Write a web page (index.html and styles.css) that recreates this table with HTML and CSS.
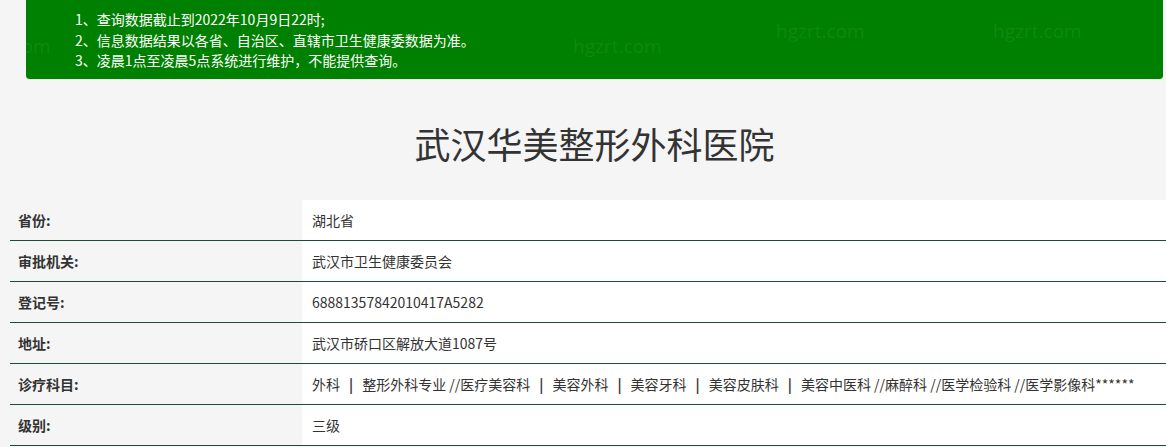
FILE: index.html
```html
<!DOCTYPE html>
<html lang="zh-CN">
<head>
<meta charset="utf-8">
<title>武汉华美整形外科医院</title>
<link rel="stylesheet" href="styles.css">
</head>
<body>
<div class="notice">
  <p>1、查询数据截止到2022年10月9日22时;</p>
  <p>2、信息数据结果以各省、自治区、直辖市卫生健康委数据为准。</p>
  <p>3、凌晨1点至凌晨5点系统进行维护，不能提供查询。</p>
  <span class="wm wm1">hgzrt.com</span>
  <span class="wm wm4">hgzrt.com</span>
  <span class="wm wm5">hgzrt.com</span>
  <span class="wm wm6">hgzrt.com</span>
</div>
<h1 class="title">武汉华美整形外科医院</h1>
<div class="info">
  <div class="row"><div class="label">省份:</div><div class="value">湖北省</div></div>
  <div class="row"><div class="label">审批机关:</div><div class="value">武汉市卫生健康委员会</div></div>
  <div class="row"><div class="label">登记号:</div><div class="value">68881357842010417A5282</div></div>
  <div class="row"><div class="label">地址:</div><div class="value">武汉市硚口区解放大道1087号</div></div>
  <div class="row"><div class="label">诊疗科目:</div><div class="value">外科<span class="sep">|</span>整形外科专业 //医疗美容科<span class="sep">|</span>美容外科<span class="sep">|</span>美容牙科<span class="sep">|</span>美容皮肤科<span class="sep">|</span>美容中医科 //麻醉科 //医学检验科 //医学影像科******</div></div>
  <div class="row"><div class="label">级别:</div><div class="value">三级</div></div>
</div>
</body>
</html>
```
FILE: styles.css
```css
html, body {
  margin: 0;
  padding: 0;
}
body {
  background: #f5f5f5;
  font-family: "Noto Sans CJK SC", "Microsoft YaHei", sans-serif;
  color: #333;
  overflow: hidden;
}
.notice {
  position: relative;
  overflow: hidden;
  margin-left: 26px;
  width: 1137px;
  height: 80px;
  box-sizing: border-box;
  padding: 9px 0 0 49px;
  background: #008000;
  border-radius: 0 0 4px 4px;
  color: #fff;
  font-size: 14px;
  border-bottom: 1px solid #e8f0e8;
}
.notice p {
  margin: 0;
  line-height: 20.5px;
  position: relative;
  z-index: 1;
}
.wm {
  position: absolute;
  font-family: "Open Sans", sans-serif;
  font-size: 19px;
  color: rgba(255, 255, 255, 0.08);
  white-space: nowrap;
}
.wm1 { left: -64px; top: 33px; }
.wm4 { left: 547px; top: 33px; }
.wm5 { left: 750px; top: 18px; }
.wm6 { left: 967px; top: 18px; }
.title {
  margin: 0 0 0 26px;
  width: 1137px;
  height: 120px;
  box-sizing: border-box;
  padding-top: 38px;
  text-align: center;
  font-size: 36px;
  font-weight: normal;
  line-height: 50px;
  color: #333;
}
.info {
  margin-left: 10px;
  width: 1156px;
}
.row {
  display: flex;
  height: 41px;
  box-sizing: border-box;
  border-bottom: 1px solid #1e4d35;
}
.label {
  width: 292px;
  box-sizing: border-box;
  padding-left: 8px;
  font-size: 14px;
  font-weight: bold;
  line-height: 40px;
  color: #333;
}
.value {
  flex: 1;
  background: #fff;
  padding-left: 10px;
  font-size: 14px;
  line-height: 40px;
  color: #333;
  white-space: nowrap;
  overflow: hidden;
}
.sep {
  margin: 0 9px;
  font-weight: bold;
}
```
